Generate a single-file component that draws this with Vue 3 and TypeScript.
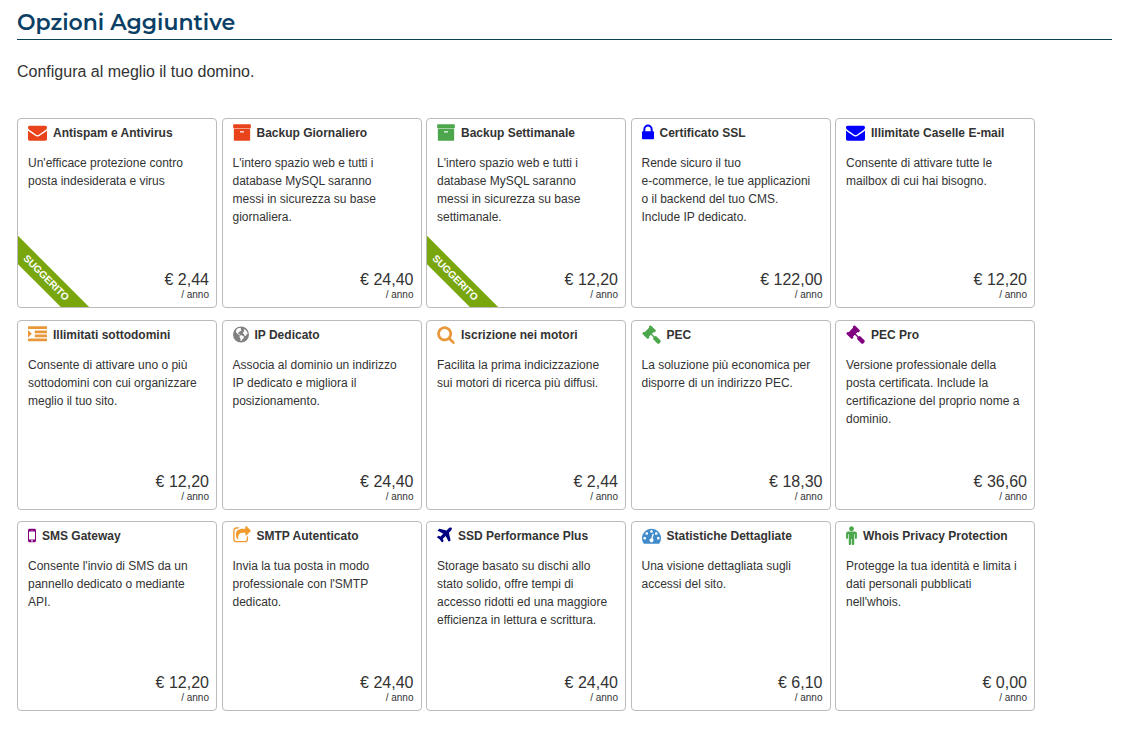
<script setup lang="ts">
type IconName =
  | 'envelope' | 'archive' | 'lock' | 'indent' | 'globe' | 'search' | 'gavel'
  | 'mobile' | 'share' | 'plane' | 'gauge' | 'person'

interface Icon {
  x: number
  units: number
  width: number
  path: string
}

interface Option {
  title: string
  text: string
  price: string
  icon: IconName
  color: string
  suggested?: boolean
}

const icons: Record<IconName, Icon> = {
  envelope: { x: 0, units: 1792, width: 19, path: 'M1792 710v794q0 66-47 113t-113 47h-1472q-66 0-113-47t-47-113v-794q44 49 101 87 362 246 497 345 57 42 92.5 65.5t94.5 48 110 24.5h2q51 0 110-24.5t94.500-48 92.500-65.500q170-123 498-345 57-39 100-87zm0-294q0 79-49 151t-122 123q-376 261-468 325-10 7-42.500 30.500t-54 38-52 32.500-57.500 27-50 9h-2q-23 0-50-9t-57.500-27-52-32.500-54-38-42.500-30.500q-91-64-262-182.500t-205-142.500q-62-42-117-115.500t-55-136.500q0-78 41.500-130t118.500-52h1472q65 0 112.500 47t47.500 113z' },
  archive: { x: 64, units: 1664, width: 18, path: 'M1088 832q0-26-19-45t-45-19h-256q-26 0-45 19t-19 45 19 45 45 19h256q26 0 45-19t19-45zm576-192v960q0 26-19 45t-45 19h-1408q-26 0-45-19t-19-45v-960q0-26 19-45t45-19h1408q26 0 45 19t19 45zm64-448v256q0 26-19 45t-45 19h-1536q-26 0-45-19t-19-45v-256q0-26 19-45t45-19h1536q26 0 45 19t19 45z' },
  lock: { x: 320, units: 1152, width: 12, path: 'M640 768h512v-192q0-106-75-181t-181-75-181 75-75 181v192zm832 96v576q0 40-28 68t-68 28h-960q-40 0-68-28t-28-68v-576q0-40 28-68t68-28h32v-192q0-184 132-316t316-132 316 132 132 316v192h32q40 0 68 28t28 68z' },
  indent: { x: 0, units: 1792, width: 19, path: 'M352 832q0 14-9 23l-288 288q-9 9-23 9-13 0-22.500-9.500t-9.500-22.500v-576q0-13 9.500-22.500t22.500-9.500q14 0 23 9l288 288q9 9 9 23zM32 1280h1728q32 0 32 32v192q0 32-32 32h-1728q-32 0-32-32v-192q0-32 32-32zM672 896h1088q32 0 32 32v192q0 32-32 32h-1088q-32 0-32-32v-192q0-32 32-32zM672 512h1088q32 0 32 32v192q0 32-32 32h-1088q-32 0-32-32v-192q0-32 32-32zM32 128h1728q32 0 32 32v192q0 32-32 32h-1728q-32 0-32-32v-192q0-32 32-32z' },
  globe: { x: 128, units: 1536, width: 16, path: 'M896 128a768 768 0 1 0 0 1536a768 768 0 1 0 0-1536zM600 290l220-50 90 60-70 90 90 50-40 110-120 30-80 130-90 30 50 90 100 30 50 90-60 10-170-140-100-60-70-140 60-190zM790 950l180 20 220 130-50 150-120 90-70 170-80 20-40-250-80-150zM1190 360l180 120 130 190 30 210-90-40-70 170-100 50-80-180-110-80 20-140 120-60-60-120z' },
  search: { x: 64, units: 1664, width: 18, path: 'M1216 832q0-185-131.500-316.500t-316.500-131.500-316.500 131.500-131.500 316.500 131.500 316.500 316.500 131.500 316.500-131.500 131.500-316.500zm512 832q0 52-38 90t-90 38q-54 0-90-38l-343-342q-179 124-399 124-143 0-273.500-55.500t-225-150-150-225-55.500-273.500 55.500-273.500 150-225 225-150 273.500-55.500 273.500 55.500 225 150 150 225 55.500 273.500q0 220-124 399l343 343q37 37 37 90z' },
  gavel: { x: 0, units: 1792, width: 19, path: 'M1771 1536q0 53-37 90l-107 108q-39 37-91 37-53 0-90-37l-363-364q-38-36-38-90 0-53 43-96l-256-256-126 126q-14 14-34 14t-34-14q2 2 12.500 12t12.500 13 10 11.500 10 13.500 6 13.500 5.500 16.500 1.500 18q0 38-28 68-3 3-16.500 18t-19 20.500-18.500 16.500-22 15.500-22 9-26 4.500q-40 0-68-28l-408-408q-28-28-28-68 0-13 4.500-26t9-22 15.500-22 16.500-18.500 20.500-19 18-16.500q30-28 68-28 10 0 18 1.500t16.500 5.500 13.500 6 13.500 10 11.500 10 13 12.500 12 12.500q-14-14-14-34t14-34l348-348q14-14 34-14t34 14q-2-2-12.500-12t-12.500-13-10-11.500-10-13.500-6-13.500-5.500-16.500-1.500-18q0-38 28-68 3-3 16.500-18t19-20.500 18.500-16.500 22-15.500 22-9 26-4.500q40 0 68 28l408 408q28 28 28 68 0 13-4.500 26t-9 22-15.500 22-16.500 18.500-20.500 19-18 16.500q-30 28-68 28-10 0-18-1.500t-16.500-5.500-13.500-6-13.500-10-11.500-10-13-12.500-12-12.500q14 14 14 34t-14 34l-126 126 256 256q43-43 96-43 52 0 91 37l363 363q37 39 37 91z' },
  mobile: { x: 512, units: 768, width: 8, path: 'M976 1408q0-33-23.500-56.500t-56.500-23.500-56.500 23.500-23.500 56.500 23.500 56.500 56.500 23.500 56.500-23.500 23.500-56.500zm208-160v-704q0-13-9.500-22.500t-22.500-9.500h-512q-13 0-22.500 9.500t-9.500 22.500v704q0 13 9.500 22.500t22.500 9.500h512q13 0 22.500-9.500t9.500-22.500zm-192-848q0-16-16-16h-160q-16 0-16 16t16 16h160q16 0 16-16zm288-16v1024q0 52-38 90t-90 38h-512q-52 0-90-38t-38-90v-1024q0-52 38-90t90-38h512q52 0 90 38t38 90z' },
  share: { x: 64, units: 1664, width: 18, path: 'M1472 989v259q0 119-84.500 203.500t-203.500 84.500h-832q-119 0-203.500-84.500t-84.500-203.500v-832q0-119 84.500-203.500t203.500-84.500h255q13 0 22.500 9.500t9.500 22.500q0 27-26 32-77 26-133 60-10 4-16 4h-112q-66 0-113 47t-47 113v832q0 66 47 113t113 47h832q66 0 113-47t47-113v-214q0-19 18-29 28-13 54-37 16-16 35-8 21 9 21 29zm237-496l-384 384q-18 19-45 19-12 0-25-5-39-17-39-59v-192h-160q-323 0-438 131-119 137-74 473 3 23-20 34-8 2-12 2-16 0-26-13-10-14-21-31t-39.500-68.500-49.500-99.500-38.500-114-17.500-122q0-49 3.500-91t14-90 28-88 47-81.500 68.500-74 94.500-61.500 124.500-48.500 159.500-30.500 196.500-11h160v-192q0-42 39-59 13-5 25-5 26 0 45 19l384 384q19 19 19 45t-19 45z' },
  plane: { x: 192, units: 1408, width: 15, path: 'M1568 160q44 52 12 148t-108 172l-161 161 160 696q5 19-12 33l-128 96q-7 6-19 6-4 0-7-1-15-3-21-16l-279-508-259 259 53 194q5 17-8 31l-96 96q-9 9-23 9h-2q-15-2-24-13l-189-252-252-189q-11-7-13-23-1-13 9-25l96-97q9-9 23-9 6 0 8 1l194 53 259-259-508-279q-14-8-17-24-2-16 9-27l128-128q14-13 30-8l665 159 160-160q76-76 172-108t148 12z' },
  gauge: { x: 0, units: 1792, width: 19, path: 'M384 1152q0-53-37.500-90.500t-90.500-37.500-90.500 37.500-37.500 90.500 37.500 90.500 90.500 37.500 90.500-37.500 37.500-90.500zm192-448q0-53-37.500-90.500t-90.500-37.500-90.500 37.500-37.500 90.500 37.500 90.500 90.500 37.500 90.500-37.500 37.500-90.500zm428 481l101-382q6-26-7.500-48.500t-38.500-29.500-48 6.500-30 39.500l-101 382q-60 5-107 43.500t-63 98.500q-20 77 20 146t117 89 146-20 89-117q16-60-6-117t-72-91zm660-33q0-53-37.500-90.500t-90.500-37.500-90.500 37.500-37.500 90.500 37.500 90.500 90.500 37.500 90.500-37.500 37.500-90.500zm-640-640q0-53-37.500-90.500t-90.500-37.500-90.500 37.500-37.500 90.500 37.500 90.500 90.500 37.500 90.500-37.500 37.500-90.500zm448 192q0-53-37.500-90.500t-90.500-37.500-90.500 37.500-37.500 90.500 37.500 90.500 90.500 37.500 90.500-37.500 37.500-90.500zm320 448q0 261-141 483-19 29-54 29h-1402q-35 0-54-29-141-221-141-483 0-182 71-348t191-286 286-191 348-71 348 71 286 191 191 286 71 348z' },
  person: { x: 384, units: 1024, width: 11, path: 'M1408 704v416q0 40-28 68t-68 28-68-28-28-68v-352h-64v912q0 46-33 79t-79 33-79-33-33-79v-464h-64v464q0 46-33 79t-79 33-79-33-33-79v-912h-64v352q0 40-28 68t-68 28-68-28-28-68v-416q0-80 56-136t136-56h640q80 0 136 56t56 136zm-288-448q0 93-65.500 158.500t-158.500 65.500-158.500-65.500-65.500-158.500 65.500-158.500 158.500-65.500 158.500 65.500 65.500 158.500z' },
}

const options: Option[] = [
  { title: 'Antispam e Antivirus', text: "Un'efficace protezione contro\nposta indesiderata e virus", price: '2,44', icon: 'envelope', color: '#e8431a', suggested: true },
  { title: 'Backup Giornaliero', text: "L'intero spazio web e tutti i\ndatabase MySQL saranno\nmessi in sicurezza su base\ngiornaliera.", price: '24,40', icon: 'archive', color: '#e8431a' },
  { title: 'Backup Settimanale', text: "L'intero spazio web e tutti i\ndatabase MySQL saranno\nmessi in sicurezza su base\nsettimanale.", price: '12,20', icon: 'archive', color: '#4ca64c', suggested: true },
  { title: 'Certificato SSL', text: 'Rende sicuro il tuo\ne-commerce, le tue applicazioni\no il backend del tuo CMS.\nInclude IP dedicato.', price: '122,00', icon: 'lock', color: '#0000ff' },
  { title: 'Illimitate Caselle E-mail', text: 'Consente di attivare tutte le\nmailbox di cui hai bisogno.', price: '12,20', icon: 'envelope', color: '#0000ff' },
  { title: 'Illimitati sottodomini', text: 'Consente di attivare uno o più\nsottodomini con cui organizzare\nmeglio il tuo sito.', price: '12,20', icon: 'indent', color: '#e8983a' },
  { title: 'IP Dedicato', text: 'Associa al dominio un indirizzo\nIP dedicato e migliora il\nposizionamento.', price: '24,40', icon: 'globe', color: '#808080' },
  { title: 'Iscrizione nei motori', text: 'Facilita la prima indicizzazione\nsui motori di ricerca più diffusi.', price: '2,44', icon: 'search', color: '#e8983a' },
  { title: 'PEC', text: 'La soluzione più economica per\ndisporre di un indirizzo PEC.', price: '18,30', icon: 'gavel', color: '#4ca64c' },
  { title: 'PEC Pro', text: 'Versione professionale della\nposta certificata. Include la\ncertificazione del proprio nome a\ndominio.', price: '36,60', icon: 'gavel', color: '#800080' },
  { title: 'SMS Gateway', text: "Consente l'invio di SMS da un\npannello dedicato o mediante\nAPI.", price: '12,20', icon: 'mobile', color: '#800080' },
  { title: 'SMTP Autenticato', text: "Invia la tua posta in modo\nprofessionale con l'SMTP\ndedicato.", price: '24,40', icon: 'share', color: '#f09a30' },
  { title: 'SSD Performance Plus', text: 'Storage basato su dischi allo\nstato solido, offre tempi di\naccesso ridotti ed una maggiore\nefficienza in lettura e scrittura.', price: '24,40', icon: 'plane', color: '#000080' },
  { title: 'Statistiche Dettagliate', text: 'Una visione dettagliata sugli\naccessi del sito.', price: '6,10', icon: 'gauge', color: '#428bca' },
  { title: 'Whois Privacy Protection', text: "Protegge la tua identità e limita i\ndati personali pubblicati\nnell'whois.", price: '0,00', icon: 'person', color: '#4ca64c' },
]
</script>

<template>
  <main class="page">
    <h1 class="heading">Opzioni Aggiuntive</h1>
    <p class="intro">Configura al meglio il tuo domino.</p>
    <section class="options">
      <article v-for="option in options" :key="option.title" class="card">
        <h2 class="title">
          <svg
            class="icon"
            :style="{ color: option.color }"
            :width="icons[option.icon].width"
            height="19"
            :viewBox="`${icons[option.icon].x} 0 ${icons[option.icon].units} 1792`"
            aria-hidden="true"
          >
            <path :d="icons[option.icon].path" fill="currentColor" fill-rule="evenodd" />
          </svg>
          <span>{{ option.title }}</span>
        </h2>
        <p class="text">{{ option.text }}</p>
        <p class="price">
          <span class="amount">€ {{ option.price }}</span>
          <span class="period">/ anno</span>
        </p>
        <span v-if="option.suggested" class="ribbon">SUGGERITO</span>
      </article>
    </section>
  </main>
</template>

<style>
body {
  margin: 0;
  background: #fff;
}
</style>

<style scoped>
.page {
  padding: 7px 21px 18px 17px;
  font-family: "Liberation Sans", Arial, sans-serif;
  color: #333;
}

.heading {
  margin: 0;
  border-bottom: 1px solid #0a4358;
  font-family: Montserrat, Inter, sans-serif;
  font-size: 22px;
  font-weight: 600;
  line-height: 32px;
  color: #0b3f66;
}

.intro {
  margin: 20px 0 34px;
  font-size: 16px;
  line-height: 24px;
}

.options {
  display: grid;
  grid-template-columns: repeat(auto-fill, 200px);
  justify-content: space-between;
  align-content: space-between;
  gap: 11px 4px;
  max-width: 1018px;
  min-height: 593px;
}

.card {
  position: relative;
  box-sizing: border-box;
  display: flex;
  flex-direction: column;
  min-height: 190px;
  padding: 4px 7px 6px 10px;
  border: 1px solid #bbb;
  border-radius: 4px;
  overflow: hidden;
}

.title {
  display: flex;
  align-items: flex-start;
  gap: 6px;
  margin: 0 0 11px;
  font-size: 12px;
  line-height: 20px;
  font-weight: 700;
}

.icon {
  flex: none;
}

.text {
  margin: 0;
  font-size: 12px;
  line-height: 18px;
  white-space: pre-line;
}

.price {
  display: flex;
  flex-direction: column;
  align-items: flex-end;
  margin: auto 0 0;
}

.amount {
  font-size: 16px;
  line-height: 18px;
}

.period {
  font-size: 10px;
  line-height: 12px;
}

.ribbon {
  position: absolute;
  left: -32px;
  bottom: 19px;
  width: 120px;
  background: #78a60c;
  color: #fff;
  font-size: 10px;
  font-weight: 700;
  line-height: 20px;
  text-align: center;
  transform: rotate(45deg);
}
</style>
